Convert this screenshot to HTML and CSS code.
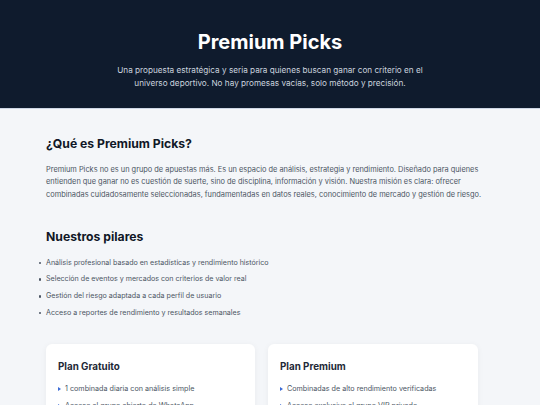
FILE: index.html
```html
<!DOCTYPE html>
<html lang="es">
<head>
<meta charset="utf-8">
<title>Premium Picks</title>
<link rel="stylesheet" href="styles.css">
</head>
<body>
<header class="hero">
  <h1 class="hero-title">Premium Picks</h1>
  <p class="hero-sub">Una propuesta estratégica y seria para quienes buscan ganar con criterio en el universo deportivo. No hay promesas vacías, solo método y precisión.</p>
</header>
<main class="content">
  <section class="section">
    <h2 class="section-title">¿Qué es Premium Picks?</h2>
    <p class="section-text">Premium Picks no es un grupo de apuestas más. Es un espacio de análisis, estrategia y rendimiento. Diseñado para quienes entienden que ganar no es cuestión de suerte, sino de disciplina, información y visión. Nuestra misión es clara: ofrecer combinadas cuidadosamente seleccionadas, fundamentadas en datos reales, conocimiento de mercado y gestión de riesgo.</p>
  </section>
  <section class="section section-pillars">
    <h2 class="section-title">Nuestros pilares</h2>
    <ul class="pillars">
      <li>Análisis profesional basado en estadísticas y rendimiento histórico</li>
      <li>Selección de eventos y mercados con criterios de valor real</li>
      <li>Gestión del riesgo adaptada a cada perfil de usuario</li>
      <li>Acceso a reportes de rendimiento y resultados semanales</li>
    </ul>
  </section>
  <section class="plans">
    <div class="plan">
      <h3 class="plan-title">Plan Gratuito</h3>
      <ul class="plan-list">
        <li>1 combinada diaria con análisis simple</li>
        <li>Acceso al grupo abierto de WhatsApp</li>
        <li>Resumen semanal de resultados</li>
      </ul>
    </div>
    <div class="plan">
      <h3 class="plan-title">Plan Premium</h3>
      <ul class="plan-list">
        <li>Combinadas de alto rendimiento verificadas</li>
        <li>Acceso exclusivo al grupo VIP privado</li>
        <li>Análisis detallado y gestión de banca</li>
      </ul>
    </div>
  </section>
</main>
</body>
</html>
```
FILE: styles.css
```css
* { box-sizing: border-box; }
html, body { margin: 0; padding: 0; }
body {
  font-family: Inter, "Noto Sans", sans-serif;
  background: #f4f6f9;
  color: #111827;
}
.hero {
  background: #0f1b2d;
  border-bottom: 1px solid #cdd6e4;
  text-align: center;
  padding: 29px 20px 0;
  height: 109px;
}
.hero-title {
  margin: 0;
  font-size: 20px;
  font-weight: 700;
  color: #ffffff;
  line-height: 26px;
}
.hero-sub {
  margin: 9px auto 0;
  max-width: 318px;
  font-size: 8.2px;
  line-height: 13px;
  color: #cbd3df;
}
.content {
  padding: 26px 46px 0;
}
.section { margin-bottom: 26.5px; }
.section-title {
  margin: 0 0 10.5px;
  font-size: 12.2px;
  font-weight: 700;
  line-height: 18px;
  color: #111827;
}
.section-text {
  margin: 0;
  font-size: 7.4px;
  line-height: 12.5px;
  color: #4b5563;
}
.pillars {
  margin: 0;
  padding: 0;
  list-style: none;
}
.pillars li {
  position: relative;
  font-size: 7.1px;
  line-height: 12px;
  color: #4b5563;
  margin-bottom: 4.8px;
}
.pillars li::before {
  content: "";
  position: absolute;
  left: -7.5px;
  top: 5px;
  width: 2.5px;
  height: 2.5px;
  border-radius: 50%;
  background: #4b5563;
}
.section-pillars { margin-bottom: 25px; }
.section-pillars .section-title { margin-bottom: 11px; }
.plans {
  display: grid;
  grid-template-columns: 209px 210px;
  gap: 13px;
}
.plan {
  background: #ffffff;
  border-radius: 6px;
  box-shadow: 0 1px 6px rgba(15, 27, 45, 0.05);
  padding: 16px 12px 14px;
  min-height: 120px;
}
.plan-title {
  margin: 0 0 9px;
  font-size: 9.8px;
  font-weight: 700;
  line-height: 14px;
  color: #1f2937;
}
.plan-list {
  margin: 0;
  padding: 0;
  list-style: none;
}
.plan-list li {
  position: relative;
  padding-left: 7px;
  font-size: 7.2px;
  line-height: 12px;
  color: #4b5563;
  margin-bottom: 5px;
}
.plan-list li::before {
  content: "";
  position: absolute;
  left: 0;
  top: 4.5px;
  border-left: 3.5px solid #3b6bd6;
  border-top: 2px solid transparent;
  border-bottom: 2px solid transparent;
}
```
